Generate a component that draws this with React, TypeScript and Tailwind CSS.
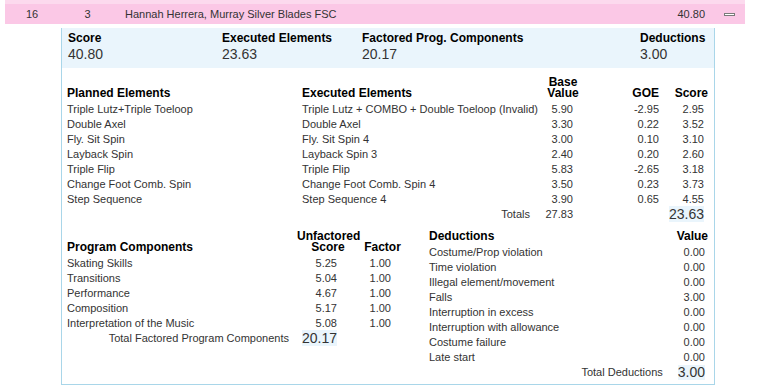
const planned = [
  "Triple Lutz+Triple Toeloop",
  "Double Axel",
  "Fly. Sit Spin",
  "Layback Spin",
  "Triple Flip",
  "Change Foot Comb. Spin",
  "Step Sequence",
];

const executed = [
  { name: "Triple Lutz + COMBO + Double Toeloop (Invalid)", base: "5.90", goe: "-2.95", score: "2.95" },
  { name: "Double Axel", base: "3.30", goe: "0.22", score: "3.52" },
  { name: "Fly. Sit Spin 4", base: "3.00", goe: "0.10", score: "3.10" },
  { name: "Layback Spin 3", base: "2.40", goe: "0.20", score: "2.60" },
  { name: "Triple Flip", base: "5.83", goe: "-2.65", score: "3.18" },
  { name: "Change Foot Comb. Spin 4", base: "3.50", goe: "0.23", score: "3.73" },
  { name: "Step Sequence 4", base: "3.90", goe: "0.65", score: "4.55" },
];

const components = [
  { name: "Skating Skills", score: "5.25", factor: "1.00" },
  { name: "Transitions", score: "5.04", factor: "1.00" },
  { name: "Performance", score: "4.67", factor: "1.00" },
  { name: "Composition", score: "5.17", factor: "1.00" },
  { name: "Interpretation of the Music", score: "5.08", factor: "1.00" },
];

const deductions = [
  { name: "Costume/Prop violation", value: "0.00" },
  { name: "Time violation", value: "0.00" },
  { name: "Illegal element/movement", value: "0.00" },
  { name: "Falls", value: "3.00" },
  { name: "Interruption in excess", value: "0.00" },
  { name: "Interruption with allowance", value: "0.00" },
  { name: "Costume failure", value: "0.00" },
  { name: "Late start", value: "0.00" },
];

const summary = [
  { label: "Score", value: "40.80", width: "w-[154px]" },
  { label: "Executed Elements", value: "23.63", width: "w-[140px]" },
  { label: "Factored Prog. Components", value: "20.17", width: "w-[278px]" },
  { label: "Deductions", value: "3.00", width: "" },
];

function SkaterRow() {
  return (
    <div className="w-[740px]">
      <div className="h-[4px] bg-[#fcdaee]" />
      <div className="flex h-[20px] items-center bg-[#fbc8e6] leading-[20px]">
        <span className="w-[54px] text-center">16</span>
        <span className="w-[57px] text-center">3</span>
        <span className="flex-1 pl-[9px]">Hannah Herrera, Murray Silver Blades FSC</span>
        <span>40.80</span>
        <span className="mr-[10px] ml-[19px] h-[3px] w-[11px] border border-[#7a7a7a] bg-white" />
      </div>
    </div>
  );
}

function Summary() {
  return (
    <div className="flex bg-[#eaf5fc] pt-[2px] pb-[6px] pl-[6px]">
      {summary.map((s) => (
        <div key={s.label} className={s.width}>
          <div className="text-[12px] leading-[16px] font-bold text-black">{s.label}</div>
          <div className="text-[14px] leading-[16px]">{s.value}</div>
        </div>
      ))}
    </div>
  );
}

function Elements() {
  const cols = "grid grid-cols-[235px_241px_40px_76px_49px]";
  return (
    <div className="pt-[9px] pl-[5px]">
      <div className={`${cols} mb-[3px] h-[22px] items-end text-[12px] leading-[11px] font-bold text-black`}>
        <div>Planned Elements</div>
        <div>Executed Elements</div>
        <div className="text-center">
          Base
          <br />
          Value
        </div>
        <div className="text-right">GOE</div>
        <div className="text-right">Score</div>
      </div>
      {executed.map((e, i) => (
        <div key={e.name} className={`${cols} h-[15px] leading-[15px]`}>
          <div>{planned[i]}</div>
          <div className="whitespace-nowrap">{e.name}</div>
          <div className="pr-[10px] text-right">{e.base}</div>
          <div className="text-right">{e.goe}</div>
          <div className="pr-[4px] text-right">{e.score}</div>
        </div>
      ))}
      <div className={`${cols} h-[15px] leading-[15px]`}>
        <div />
        <div className="pr-[13px] text-right">Totals</div>
        <div className="pr-[10px] text-right">27.83</div>
        <div />
        <div className="pr-[4px] text-right">
          <span className="bg-[#eaf5fc] text-[14px] leading-[15px]">23.63</span>
        </div>
      </div>
    </div>
  );
}

function ProgramComponents() {
  const cols = "grid grid-cols-[230px_62px_47px]";
  return (
    <div className="w-[362px]">
      <div className={`${cols} mb-[3px] h-[22px] items-end text-[12px] leading-[11px] font-bold text-black`}>
        <div>Program Components</div>
        <div className="text-center">
          Unfactored
          <br />
          Score
        </div>
        <div className="text-center">Factor</div>
      </div>
      {components.map((c) => (
        <div key={c.name} className={`${cols} h-[15px] leading-[15px]`}>
          <div>{c.name}</div>
          <div className="pr-[22px] text-right">{c.score}</div>
          <div className="pr-[15px] text-right">{c.factor}</div>
        </div>
      ))}
      <div className={`${cols} h-[15px] leading-[15px]`}>
        <div className="pr-[8px] text-right">Total Factored Program Components</div>
        <div className="pr-[22px] text-right">
          <span className="bg-[#eaf5fc] text-[14px] leading-[15px]">20.17</span>
        </div>
        <div />
      </div>
    </div>
  );
}

function Deductions() {
  return (
    <div className="w-[279px]">
      <div className="mb-[3px] flex h-[11px] justify-between text-[12px] leading-[11px] font-bold text-black">
        <span>Deductions</span>
        <span>Value</span>
      </div>
      {deductions.map((d) => (
        <div key={d.name} className="flex h-[15px] justify-between pr-[3px] leading-[15px]">
          <span>{d.name}</span>
          <span>{d.value}</span>
        </div>
      ))}
      <div className="flex h-[15px] items-center justify-end pr-[3px] leading-[15px]">
        <span className="mr-[15px]">Total Deductions</span>
        <span className="bg-[#eaf5fc] text-[14px] leading-[15px]">3.00</span>
      </div>
    </div>
  );
}

export default function App() {
  return (
    <div className="min-h-screen bg-white pl-[5px] font-['Liberation_Sans',Arial,sans-serif] text-[11px] text-[#333]">
      <SkaterRow />
      <div className="mt-[4px] ml-[56px] w-[654px] border-x border-b border-[#a9d6e9] pb-[4px]">
        <Summary />
        <Elements />
        <div className="flex pt-[9px] pl-[5px]">
          <ProgramComponents />
          <Deductions />
        </div>
      </div>
    </div>
  );
}
